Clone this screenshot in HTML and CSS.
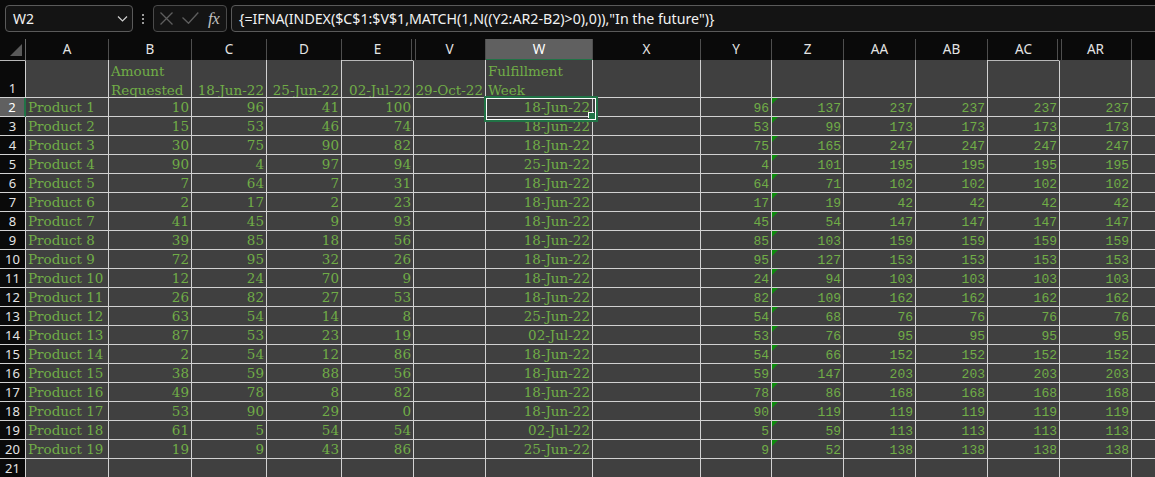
FILE: index.html
```html
<!DOCTYPE html>
<html>
<head>
<meta charset="utf-8">
<title>Sheet</title>
<link rel="stylesheet" href="styles.css">
</head>
<body>
<div class="fbar">
  <div class="namebox"><span>W2</span><svg class="chev" width="11" height="6" viewBox="0 0 11 6"><path d="M1 0.5L5.5 5L10 0.5" fill="none" stroke="#d0d0d0" stroke-width="1.2"/></svg></div>
  <div class="dots"><i></i><i></i><i></i></div>
  <div class="fxbox">
    <svg class="ix" width="13" height="13" viewBox="0 0 13 13"><path d="M0.5 0.5L12.5 12.5M12.5 0.5L0.5 12.5" stroke="#5e5e5e" stroke-width="1.3"/></svg>
    <svg class="ic" width="17" height="12" viewBox="0 0 17 12"><path d="M0.5 5.5L6.5 11.3L16.3 0.5" fill="none" stroke="#5e5e5e" stroke-width="1.3"/></svg>
    <span class="fx">fx</span>
  </div>
  <div class="formula">{=IFNA(INDEX($C$1:$V$1,MATCH(1,N((Y2:AR2-B2)&gt;0),0)),"In the future")}</div>
</div>
<div class="sheet">
  <div class="row hdr">
    <div class="corner"><span class="tri"></span></div>
    <div class="ch">A</div><div class="ch">B</div><div class="ch">C</div><div class="ch">D</div><div class="ch hid">E</div><div class="ch">V</div><div class="ch selc">W</div><div class="ch">X</div><div class="ch">Y</div><div class="ch">Z</div><div class="ch">AA</div><div class="ch">AB</div><div class="ch hid">AC</div><div class="ch">AR</div><div class="ch"></div>
  </div>
  <div class="row r1">
    <div class="rh">1</div>
    <div class="c"></div><div class="c w"><span>Amount Requested</span></div><div class="c n"><span>18-Jun-22</span></div><div class="c n"><span>25-Jun-22</span></div><div class="c n"><span>02-Jul-22</span></div><div class="c n"><span>29-Oct-22</span></div><div class="c w"><span>Fulfillment Week</span></div><div class="c"></div><div class="c"></div><div class="c"></div><div class="c"></div><div class="c"></div><div class="c"></div><div class="c"></div><div class="c"></div>
  </div>
  <div class="row"><div class="rh selr">2</div><div class="c">Product 1</div><div class="c n">10</div><div class="c n">96</div><div class="c n">41</div><div class="c n">100</div><div class="c"></div><div class="c n cur">18-Jun-22</div><div class="c"></div><div class="c m">96</div><div class="c m z">137</div><div class="c m">237</div><div class="c m">237</div><div class="c m">237</div><div class="c m">237</div><div class="c"></div></div>
  <div class="row"><div class="rh">3</div><div class="c">Product 2</div><div class="c n">15</div><div class="c n">53</div><div class="c n">46</div><div class="c n">74</div><div class="c"></div><div class="c n">18-Jun-22</div><div class="c"></div><div class="c m">53</div><div class="c m z">99</div><div class="c m">173</div><div class="c m">173</div><div class="c m">173</div><div class="c m">173</div><div class="c"></div></div>
  <div class="row"><div class="rh">4</div><div class="c">Product 3</div><div class="c n">30</div><div class="c n">75</div><div class="c n">90</div><div class="c n">82</div><div class="c"></div><div class="c n">18-Jun-22</div><div class="c"></div><div class="c m">75</div><div class="c m z">165</div><div class="c m">247</div><div class="c m">247</div><div class="c m">247</div><div class="c m">247</div><div class="c"></div></div>
  <div class="row"><div class="rh">5</div><div class="c">Product 4</div><div class="c n">90</div><div class="c n">4</div><div class="c n">97</div><div class="c n">94</div><div class="c"></div><div class="c n">25-Jun-22</div><div class="c"></div><div class="c m">4</div><div class="c m z">101</div><div class="c m">195</div><div class="c m">195</div><div class="c m">195</div><div class="c m">195</div><div class="c"></div></div>
  <div class="row"><div class="rh">6</div><div class="c">Product 5</div><div class="c n">7</div><div class="c n">64</div><div class="c n">7</div><div class="c n">31</div><div class="c"></div><div class="c n">18-Jun-22</div><div class="c"></div><div class="c m">64</div><div class="c m z">71</div><div class="c m">102</div><div class="c m">102</div><div class="c m">102</div><div class="c m">102</div><div class="c"></div></div>
  <div class="row"><div class="rh">7</div><div class="c">Product 6</div><div class="c n">2</div><div class="c n">17</div><div class="c n">2</div><div class="c n">23</div><div class="c"></div><div class="c n">18-Jun-22</div><div class="c"></div><div class="c m">17</div><div class="c m z">19</div><div class="c m">42</div><div class="c m">42</div><div class="c m">42</div><div class="c m">42</div><div class="c"></div></div>
  <div class="row"><div class="rh">8</div><div class="c">Product 7</div><div class="c n">41</div><div class="c n">45</div><div class="c n">9</div><div class="c n">93</div><div class="c"></div><div class="c n">18-Jun-22</div><div class="c"></div><div class="c m">45</div><div class="c m z">54</div><div class="c m">147</div><div class="c m">147</div><div class="c m">147</div><div class="c m">147</div><div class="c"></div></div>
  <div class="row"><div class="rh">9</div><div class="c">Product 8</div><div class="c n">39</div><div class="c n">85</div><div class="c n">18</div><div class="c n">56</div><div class="c"></div><div class="c n">18-Jun-22</div><div class="c"></div><div class="c m">85</div><div class="c m z">103</div><div class="c m">159</div><div class="c m">159</div><div class="c m">159</div><div class="c m">159</div><div class="c"></div></div>
  <div class="row"><div class="rh">10</div><div class="c">Product 9</div><div class="c n">72</div><div class="c n">95</div><div class="c n">32</div><div class="c n">26</div><div class="c"></div><div class="c n">18-Jun-22</div><div class="c"></div><div class="c m">95</div><div class="c m z">127</div><div class="c m">153</div><div class="c m">153</div><div class="c m">153</div><div class="c m">153</div><div class="c"></div></div>
  <div class="row"><div class="rh">11</div><div class="c">Product 10</div><div class="c n">12</div><div class="c n">24</div><div class="c n">70</div><div class="c n">9</div><div class="c"></div><div class="c n">18-Jun-22</div><div class="c"></div><div class="c m">24</div><div class="c m z">94</div><div class="c m">103</div><div class="c m">103</div><div class="c m">103</div><div class="c m">103</div><div class="c"></div></div>
  <div class="row"><div class="rh">12</div><div class="c">Product 11</div><div class="c n">26</div><div class="c n">82</div><div class="c n">27</div><div class="c n">53</div><div class="c"></div><div class="c n">18-Jun-22</div><div class="c"></div><div class="c m">82</div><div class="c m z">109</div><div class="c m">162</div><div class="c m">162</div><div class="c m">162</div><div class="c m">162</div><div class="c"></div></div>
  <div class="row"><div class="rh">13</div><div class="c">Product 12</div><div class="c n">63</div><div class="c n">54</div><div class="c n">14</div><div class="c n">8</div><div class="c"></div><div class="c n">25-Jun-22</div><div class="c"></div><div class="c m">54</div><div class="c m z">68</div><div class="c m">76</div><div class="c m">76</div><div class="c m">76</div><div class="c m">76</div><div class="c"></div></div>
  <div class="row"><div class="rh">14</div><div class="c">Product 13</div><div class="c n">87</div><div class="c n">53</div><div class="c n">23</div><div class="c n">19</div><div class="c"></div><div class="c n">02-Jul-22</div><div class="c"></div><div class="c m">53</div><div class="c m z">76</div><div class="c m">95</div><div class="c m">95</div><div class="c m">95</div><div class="c m">95</div><div class="c"></div></div>
  <div class="row"><div class="rh">15</div><div class="c">Product 14</div><div class="c n">2</div><div class="c n">54</div><div class="c n">12</div><div class="c n">86</div><div class="c"></div><div class="c n">18-Jun-22</div><div class="c"></div><div class="c m">54</div><div class="c m z">66</div><div class="c m">152</div><div class="c m">152</div><div class="c m">152</div><div class="c m">152</div><div class="c"></div></div>
  <div class="row"><div class="rh">16</div><div class="c">Product 15</div><div class="c n">38</div><div class="c n">59</div><div class="c n">88</div><div class="c n">56</div><div class="c"></div><div class="c n">18-Jun-22</div><div class="c"></div><div class="c m">59</div><div class="c m z">147</div><div class="c m">203</div><div class="c m">203</div><div class="c m">203</div><div class="c m">203</div><div class="c"></div></div>
  <div class="row"><div class="rh">17</div><div class="c">Product 16</div><div class="c n">49</div><div class="c n">78</div><div class="c n">8</div><div class="c n">82</div><div class="c"></div><div class="c n">18-Jun-22</div><div class="c"></div><div class="c m">78</div><div class="c m z">86</div><div class="c m">168</div><div class="c m">168</div><div class="c m">168</div><div class="c m">168</div><div class="c"></div></div>
  <div class="row"><div class="rh">18</div><div class="c">Product 17</div><div class="c n">53</div><div class="c n">90</div><div class="c n">29</div><div class="c n">0</div><div class="c"></div><div class="c n">18-Jun-22</div><div class="c"></div><div class="c m">90</div><div class="c m z">119</div><div class="c m">119</div><div class="c m">119</div><div class="c m">119</div><div class="c m">119</div><div class="c"></div></div>
  <div class="row"><div class="rh">19</div><div class="c">Product 18</div><div class="c n">61</div><div class="c n">5</div><div class="c n">54</div><div class="c n">54</div><div class="c"></div><div class="c n">02-Jul-22</div><div class="c"></div><div class="c m">5</div><div class="c m z">59</div><div class="c m">113</div><div class="c m">113</div><div class="c m">113</div><div class="c m">113</div><div class="c"></div></div>
  <div class="row"><div class="rh">20</div><div class="c">Product 19</div><div class="c n">19</div><div class="c n">9</div><div class="c n">43</div><div class="c n">86</div><div class="c"></div><div class="c n">25-Jun-22</div><div class="c"></div><div class="c m">9</div><div class="c m z">52</div><div class="c m">138</div><div class="c m">138</div><div class="c m">138</div><div class="c m">138</div><div class="c"></div></div>
  <div class="row"><div class="rh">21</div><div class="c"></div><div class="c"></div><div class="c"></div><div class="c"></div><div class="c"></div><div class="c"></div><div class="c"></div><div class="c"></div><div class="c"></div><div class="c"></div><div class="c"></div><div class="c"></div><div class="c"></div><div class="c"></div><div class="c"></div></div>
</div>
</body>
</html>
```

FILE: styles.css
```css
:root {
  --grid: #d2d2d2;
  --cell: #404040;
  --green: #70ad47;
  --sel: #217346;
  --bar: #0a0a0a;
}

* { box-sizing: border-box; }

html, body {
  margin: 0;
  background: var(--bar);
  overflow: hidden;
}

body {
  width: 1155px;
  height: 477px;
  font-family: "Noto Sans", "Open Sans", sans-serif;
}

/* ---------- formula bar ---------- */
.fbar {
  height: 39px;
  display: flex;
  align-items: flex-start;
  padding: 5px 0 0 5px;
  white-space: nowrap;
}

.namebox {
  flex: 0 0 128px;
  height: 27px;
  border: 1px solid #5a5a5a;
  border-radius: 4px;
  background: #141414;
  display: flex;
  align-items: center;
  justify-content: space-between;
  padding: 0 4px 0 7px;
  color: #f2f2f2;
  font-size: 14px;
}

.dots {
  flex: 0 0 20px;
  height: 27px;
  display: flex;
  flex-direction: column;
  align-items: center;
  justify-content: center;
  gap: 2px;
}

.dots i {
  display: block;
  width: 2px;
  height: 2px;
  background: #9a9a9a;
}

.fxbox {
  flex: 0 0 74px;
  height: 27px;
  border: 1px solid #4a4a4a;
  border-radius: 4px;
  background: #141414;
  display: flex;
  align-items: center;
  padding-left: 6px;
}

.fxbox .ix { margin-top: -1px; }
.fxbox .ic { margin-left: 9px; margin-top: -1px; }

.fx {
  margin-left: 9px;
  font-family: "Liberation Serif", serif;
  font-style: italic;
  font-size: 17px;
  color: #c0c0c0;
  letter-spacing: -0.5px;
}

.formula {
  flex: 0 0 940px;
  margin-left: 4px;
  height: 27px;
  border: 1px solid #5a5a5a;
  border-radius: 4px;
  background: #141414;
  padding-left: 7px;
  color: #f2f2f2;
  font-size: 14.2px;
  line-height: 25px;
}

/* ---------- sheet grid ---------- */
.sheet {
  width: 1204px;
}

.row {
  display: grid;
  grid-template-columns: 26px 83px 83px 75px 75px 72px 72px 107px 108px 71px 72px 72px 72px 72px 72px 72px;
  height: 19px;
}

.row.hdr { height: 21px; }
.row.r1 { height: 38px; }

/* column headers */
.corner, .ch {
  background: var(--bar);
  border-right: 1px solid #4e4e4e;
  border-bottom: 1px solid #b8b8b8;
}

.corner {
  position: relative;
  border-right-color: #6a6a6a;
}

.corner .tri {
  position: absolute;
  right: 3px;
  bottom: 4px;
  width: 0;
  height: 0;
  border-left: 12px solid transparent;
  border-bottom: 12px solid #5a5a5a;
}

.ch {
  color: #e4e4e4;
  font-size: 13.5px;
  line-height: 20px;
  text-align: center;
}

.ch.hid {
  position: relative;
  border-right-color: transparent;
}

.ch.hid::before,
.ch.hid::after {
  content: "";
  position: absolute;
  top: 0;
  bottom: 0;
  width: 1px;
  background: #4e4e4e;
  z-index: 1;
}

.ch.hid::before { right: 1px; }
.ch.hid::after { right: -3px; }

.ch.selc {
  background: #606060;
  color: #ffffff;
  border-bottom: 2px solid var(--sel);
}

/* row headers */
.rh {
  background: var(--bar);
  border-right: 1px solid var(--grid);
  border-bottom: 1px solid var(--grid);
  color: #e4e4e4;
  font-size: 13px;
  line-height: 18px;
  text-align: center;
}

.r1 .rh {
  display: flex;
  align-items: flex-end;
  justify-content: center;
  line-height: 18px;
}

.rh.selr {
  background: #606060;
  color: #ffffff;
  border-right: 2px solid var(--sel);
}

/* cells */
.c {
  background: var(--cell);
  border-right: 1px solid var(--grid);
  border-bottom: 1px solid var(--grid);
  color: var(--green);
  font-family: "DejaVu Serif", serif;
  font-size: 13.5px;
  line-height: 18px;
  padding: 0 2px 0 2px;
  white-space: nowrap;
  overflow: hidden;
}

.c.n { text-align: right; }

.c.m {
  text-align: right;
  font-family: "Liberation Mono", monospace;
  font-size: 13px;
  line-height: 16px;
  padding-top: 3px;
}

.r1 .c {
  display: flex;
  align-items: flex-end;
  white-space: normal;
  line-height: 19px;
}

.r1 .c span { margin-bottom: -3px; }
.r1 .c.n { justify-content: flex-end; white-space: nowrap; }

.c.z { position: relative; }

.c.z::before {
  content: "";
  position: absolute;
  left: 0;
  top: 0;
  width: 0;
  height: 0;
  border-top: 6px solid #0c8c0c;
  border-right: 6px solid transparent;
}

/* active cell */
.c.cur {
  position: relative;
  overflow: visible;
  z-index: 2;
}

.c.cur::after {
  content: "";
  position: absolute;
  left: -2px;
  top: -2px;
  width: 110px;
  height: 22px;
  border: 2px solid var(--sel);
  box-shadow: inset 0 0 0 1px #ffffff;
}

.c.cur::before {
  content: "";
  position: absolute;
  left: 103px;
  top: 15px;
  width: 6px;
  height: 6px;
  background: var(--sel);
  box-shadow: -1px -1px 0 #ffffff;
  z-index: 3;
}
```
